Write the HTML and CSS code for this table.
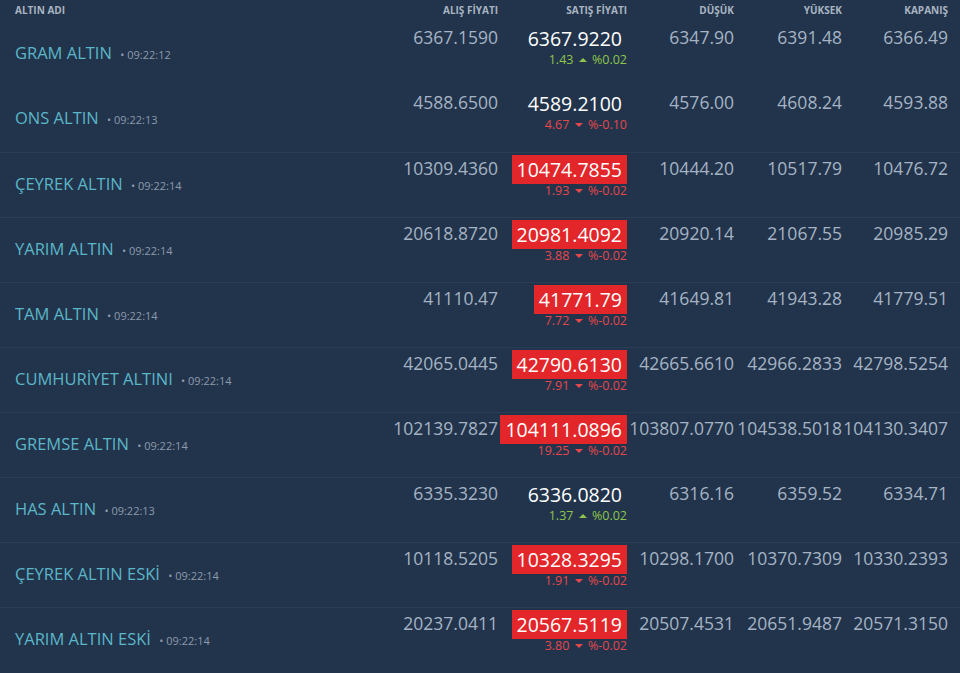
FILE: index.html
```html
<!DOCTYPE html>
<html lang="tr">
<head>
    <meta charset="UTF-8">
    <meta name="viewport" content="width=device-width, initial-scale=1.0">
    <title>Altın Fiyatları</title>
    <link rel="stylesheet" href="styles.css">
</head>
<body>
    <div class="table">
        <div class="row head">
            <div class="name">ALTIN ADI</div>
            <div class="num">ALIŞ FİYATI</div>
            <div class="num">SATIŞ FİYATI</div>
            <div class="num">DÜŞÜK</div>
            <div class="num">YÜKSEK</div>
            <div class="num">KAPANIŞ</div>
        </div>

        <div class="row first">
            <div class="name">GRAM ALTIN <span class="time">• 09:22:12</span></div>
            <div class="num">6367.1590</div>
            <div class="num sell"><span class="price">6367.9220</span><div class="change up">1.43 <i class="caret"></i> %0.02</div></div>
            <div class="num">6347.90</div>
            <div class="num">6391.48</div>
            <div class="num">6366.49</div>
        </div>

        <div class="row first">
            <div class="name">ONS ALTIN <span class="time">• 09:22:13</span></div>
            <div class="num">4588.6500</div>
            <div class="num sell"><span class="price">4589.2100</span><div class="change down">4.67 <i class="caret"></i> %-0.10</div></div>
            <div class="num">4576.00</div>
            <div class="num">4608.24</div>
            <div class="num">4593.88</div>
        </div>

        <div class="row">
            <div class="name">ÇEYREK ALTIN <span class="time">• 09:22:14</span></div>
            <div class="num">10309.4360</div>
            <div class="num sell"><span class="price flash">10474.7855</span><div class="change down">1.93 <i class="caret"></i> %-0.02</div></div>
            <div class="num">10444.20</div>
            <div class="num">10517.79</div>
            <div class="num">10476.72</div>
        </div>

        <div class="row">
            <div class="name">YARIM ALTIN <span class="time">• 09:22:14</span></div>
            <div class="num">20618.8720</div>
            <div class="num sell"><span class="price flash">20981.4092</span><div class="change down">3.88 <i class="caret"></i> %-0.02</div></div>
            <div class="num">20920.14</div>
            <div class="num">21067.55</div>
            <div class="num">20985.29</div>
        </div>

        <div class="row">
            <div class="name">TAM ALTIN <span class="time">• 09:22:14</span></div>
            <div class="num">41110.47</div>
            <div class="num sell"><span class="price flash">41771.79</span><div class="change down">7.72 <i class="caret"></i> %-0.02</div></div>
            <div class="num">41649.81</div>
            <div class="num">41943.28</div>
            <div class="num">41779.51</div>
        </div>

        <div class="row">
            <div class="name">CUMHURİYET ALTINI <span class="time">• 09:22:14</span></div>
            <div class="num">42065.0445</div>
            <div class="num sell"><span class="price flash">42790.6130</span><div class="change down">7.91 <i class="caret"></i> %-0.02</div></div>
            <div class="num">42665.6610</div>
            <div class="num">42966.2833</div>
            <div class="num">42798.5254</div>
        </div>

        <div class="row">
            <div class="name">GREMSE ALTIN <span class="time">• 09:22:14</span></div>
            <div class="num">102139.7827</div>
            <div class="num sell"><span class="price flash">104111.0896</span><div class="change down">19.25 <i class="caret"></i> %-0.02</div></div>
            <div class="num">103807.0770</div>
            <div class="num">104538.5018</div>
            <div class="num">104130.3407</div>
        </div>

        <div class="row">
            <div class="name">HAS ALTIN <span class="time">• 09:22:13</span></div>
            <div class="num">6335.3230</div>
            <div class="num sell"><span class="price">6336.0820</span><div class="change up">1.37 <i class="caret"></i> %0.02</div></div>
            <div class="num">6316.16</div>
            <div class="num">6359.52</div>
            <div class="num">6334.71</div>
        </div>

        <div class="row">
            <div class="name">ÇEYREK ALTIN ESKİ <span class="time">• 09:22:14</span></div>
            <div class="num">10118.5205</div>
            <div class="num sell"><span class="price flash">10328.3295</span><div class="change down">1.91 <i class="caret"></i> %-0.02</div></div>
            <div class="num">10298.1700</div>
            <div class="num">10370.7309</div>
            <div class="num">10330.2393</div>
        </div>

        <div class="row">
            <div class="name">YARIM ALTIN ESKİ <span class="time">• 09:22:14</span></div>
            <div class="num">20237.0411</div>
            <div class="num sell"><span class="price flash">20567.5119</span><div class="change down">3.80 <i class="caret"></i> %-0.02</div></div>
            <div class="num">20507.4531</div>
            <div class="num">20651.9487</div>
            <div class="num">20571.3150</div>
        </div>
    </div>
</body>
</html>
```

FILE: styles.css
```css
body {
    font-family: "Open Sans", "Noto Sans", sans-serif;
    margin: 0;
    padding: 0;
    background-color: #22344b;
    color: #a5b3c4;
    overflow: hidden;
}
.table {
    width: 960px;
}
.row {
    display: grid;
    grid-template-columns: 373px 110px 129px 107px 108px 106px;
    padding: 0 12px 0 15px;
    height: 65px;
    border-top: 1px solid #2b3d55;
    box-sizing: border-box;
}
.row.first {
    border-top: none;
}
.row.head {
    height: 22px;
    border-top: none;
    font-size: 10px;
    font-weight: 700;
    color: #a9b4c2;
    line-height: 20px;
}
.row.head .name {
    align-self: start;
    padding-bottom: 0;
}
.name {
    align-self: center;
    padding-bottom: 4px;
    color: #5bb6c8;
    font-size: 16.5px;
    white-space: nowrap;
}
.head .name {
    color: #a9b4c2;
    font-size: 10px;
}
.time {
    font-size: 11px;
    color: #8d9aab;
    margin-left: 4px;
}
.num {
    text-align: right;
    font-size: 17.5px;
    line-height: 26px;
    padding-top: 2px;
    white-space: nowrap;
}
.head .num {
    font-size: 10px;
    line-height: 20px;
    padding-top: 0;
}
.price {
    display: inline-block;
    font-size: 19.5px;
    line-height: 29px;
    padding: 0 5px;
    color: #ffffff;
}
.price.flash {
    background: #e2262a;
}
.change {
    font-size: 12.5px;
    line-height: 14px;
}
.change.up {
    color: #8ec54b;
}
.change.down {
    color: #e4474c;
}
.caret {
    display: inline-block;
    width: 0;
    height: 0;
    border-left: 4px solid transparent;
    border-right: 4px solid transparent;
    margin: 0 2px;
    vertical-align: 2px;
}
.up .caret {
    border-bottom: 4px solid #8ec54b;
}
.down .caret {
    border-top: 4px solid #e4474c;
}
```
